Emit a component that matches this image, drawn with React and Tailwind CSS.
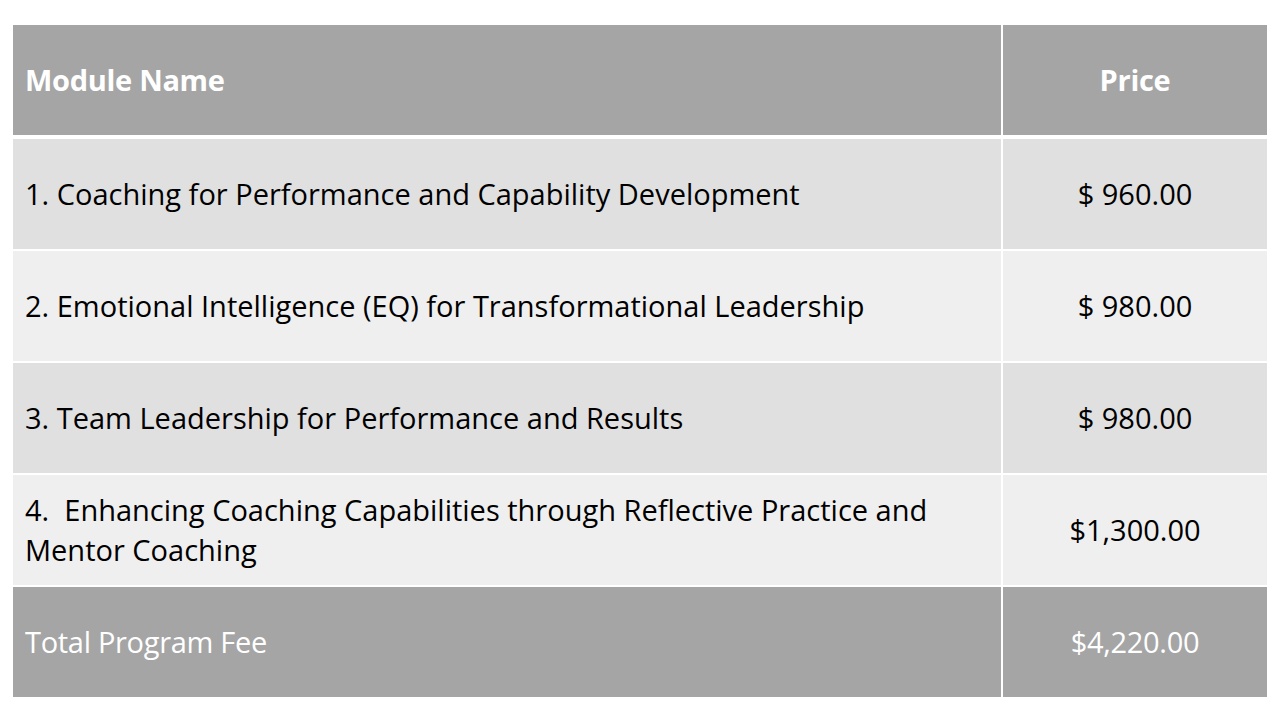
import React from "react";

const rows = [
  { name: "1. Coaching for Performance and Capability Development", price: "$ 960.00", bg: "bg-[#e0e0e0]" },
  { name: "2. Emotional Intelligence (EQ) for Transformational Leadership", price: "$ 980.00", bg: "bg-[#efefef]" },
  { name: "3. Team Leadership for Performance and Results", price: "$ 980.00", bg: "bg-[#e0e0e0]" },
  {
    name: "4.\u00a0 Enhancing Coaching Capabilities through Reflective Practice and Mentor Coaching",
    price: "$1,300.00",
    bg: "bg-[#efefef]",
  },
];

const App = () => {
  return (
    <div className="w-[1280px] h-[720px] bg-white pt-[25px] pl-[13px] font-['Open_Sans',sans-serif] text-[29px] tracking-[-0.3px]">
      <div className="w-[1254px] flex flex-col">
        <div className="flex h-[110px] gap-[2px] text-white font-bold">
          <div className="w-[988px] bg-[#a5a5a5] flex items-center px-[12px]">Module Name</div>
          <div className="flex-1 bg-[#a5a5a5] flex items-center justify-center">Price</div>
        </div>
        <div className="flex flex-col gap-[2px] mt-[4px]">
          {rows.map((row) => (
            <div key={row.name} className="flex h-[110px] gap-[2px] text-black leading-[40px] tracking-normal">
              <div className={`w-[988px] ${row.bg} flex items-center pl-[12px] pr-[30px]`}>{row.name}</div>
              <div className={`flex-1 ${row.bg} flex items-center justify-center`}>{row.price}</div>
            </div>
          ))}
          <div className="flex h-[110px] gap-[2px] text-white">
            <div className="w-[988px] bg-[#a5a5a5] flex items-center px-[12px]">Total Program Fee</div>
            <div className="flex-1 bg-[#a5a5a5] flex items-center justify-center">$4,220.00</div>
          </div>
        </div>
      </div>
    </div>
  );
};

export default App;
